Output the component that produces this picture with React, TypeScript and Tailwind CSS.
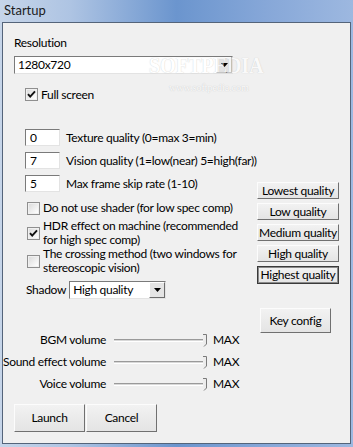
import React from 'react'

const font = "font-['Lato','Liberation_Sans',sans-serif]"

const Check = ({ checked }: { checked?: boolean }) => (
  <span className="w-[13px] h-[13px] shrink-0 border border-[#8f8f8f] bg-white flex items-center justify-center">
    <span className="w-[11px] h-[11px] border border-[#f0f0f0] bg-gradient-to-br from-[#dcdcdc] to-white flex items-center justify-center">
      {checked && (
        <svg width="9" height="9" viewBox="0 0 9 9">
          <path d="M1 4.2 L3.2 6.6 L8 1.4" stroke="#111" strokeWidth="1.9" fill="none" />
        </svg>
      )}
    </span>
  </span>
)

const Arrow = () => (
  <svg width="7" height="4" viewBox="0 0 7 4">
    <path d="M0 0 H7 L3.5 4 Z" fill="#000" />
  </svg>
)

const Combo = ({ value, width }: { value: string; width: string }) => (
  <div className={`${width} shrink-0 h-[18px] flex border-t border-l border-[#7a7a7a] border-b border-r border-b-[#e3e3e3] border-r-[#e3e3e3] bg-white`}>
    <div className="flex-1 pl-[3px] leading-[16px] whitespace-nowrap">{value}</div>
    <div className="w-[16px] h-[16px] bg-[#e4e4e4] border border-t-white border-l-white border-b-[#6c6c6c] border-r-[#6c6c6c] flex items-center justify-center">
      <Arrow />
    </div>
  </div>
)

const NumBox = ({ value, label }: { value: string; label: string }) => (
  <div className="ml-[22px] flex items-center h-[17px] whitespace-nowrap">
    <div className="w-[35px] shrink-0 h-[17px] bg-white border-t border-l border-[#7a7a7a] border-b border-r border-b-[#e3e3e3] border-r-[#e3e3e3] pl-[4px] leading-[15px]">
      {value}
    </div>
    <span className="ml-[6px]">{label}</span>
  </div>
)

const Btn = ({ label, w, h, strong }: { label: string; w: string; h: string; strong?: boolean }) => (
  <div
    className={`${w} ${h} shrink-0 whitespace-nowrap flex items-center justify-center bg-gradient-to-b from-[#f2f2f2] to-[#e4e4e4] border ${
      strong ? 'border-[#3a3a3a] outline outline-1 outline-[#8a8a8a] -outline-offset-2' : 'border-t-[#fcfcfc] border-l-[#fcfcfc] border-b-[#707070] border-r-[#707070]'
    }`}
  >
    {label}
  </div>
)

const Slider = ({ label }: { label: string }) => (
  <div className="flex items-center h-[20px] whitespace-nowrap">
    <span className="w-[103px] shrink-0 text-right">{label}</span>
    <div className="ml-[8px] relative w-[94px] shrink-0 h-[13px] flex items-center">
      <div className="w-[89px] h-[3px] border-t border-[#9a9a9a] bg-[#d8d8d8] border-b border-b-white" />
      <svg className="absolute right-0 top-0" width="6" height="13" viewBox="0 0 6 13">
        <path d="M1 0.5 H4.5 V10 L2 12.5" stroke="#7a7a7a" fill="#ececec" strokeWidth="1" />
      </svg>
    </div>
    <span className="ml-[5px]">MAX</span>
  </div>
)

export default function App() {
  return (
    <div className={`w-[353px] h-[447px] ${font} text-[12px] tracking-[-0.3px] text-black pt-[22px] pl-[2px] pr-[2px] pb-[3px] bg-[linear-gradient(90deg,#c6d5e9_0%,#aec4e3_20%,#6b95ce_50%,#86a7d8_75%,#9db8e0_100%)] relative`}>
      <div className="absolute left-[4px] top-[2px] text-[13px] leading-[17px] tracking-normal text-[#1b1b1b]">Startup</div>
      <div className="w-full h-full border border-[#54647a] bg-[#f0f0f0] relative overflow-hidden">
        <div className="flex">
          <div className="w-[254px] shrink-0 flex flex-col">
            <div className="ml-[11px] mt-[12px] h-[16px] leading-[16px]">Resolution</div>
            <div className="ml-[11px] mt-[5px]">
              <Combo value="1280x720" width="w-[219px]" />
            </div>
            <div className="ml-[22px] mt-[13px] h-[15px] flex items-center gap-[3px]">
              <Check checked />
              <span>Full screen</span>
            </div>
            <div className="mt-[27px] flex flex-col gap-[6px]">
              <NumBox value="0" label="Texture quality (0=max 3=min)" />
              <NumBox value="7" label="Vision quality (1=low(near) 5=high(far))" />
              <NumBox value="5" label="Max frame skip rate (1-10)" />
            </div>
            <div className="ml-[24px] mt-[8px] h-[16px] flex items-center gap-[3px] whitespace-nowrap">
              <Check />
              <span>Do not use shader (for low spec comp)</span>
            </div>
            <div className="ml-[24px] mt-[3px] flex items-center gap-[3px] leading-[14px]">
              <Check checked />
              <span className="whitespace-nowrap">
                HDR effect on machine (recommended
                <br />
                for high spec comp)
              </span>
            </div>
            <div className="ml-[24px] mt-[0px] flex items-center gap-[3px] leading-[14px]">
              <Check />
              <span className="whitespace-nowrap">
                The crossing method (two windows for
                <br />
                stereoscopic vision)
              </span>
            </div>
            <div className="ml-[23px] mt-[6px] flex items-center gap-[3px]">
              <span>Shadow</span>
              <Combo value="High quality" width="w-[97px]" />
            </div>
            <div className="mt-[31px] flex flex-col gap-[2px]">
              <Slider label="BGM volume" />
              <Slider label="Sound effect volume" />
              <Slider label="Voice volume" />
            </div>
            <div className="ml-[11px] mt-[10px] flex gap-[1px]">
              <Btn label="Launch" w="w-[71px]" h="h-[28px]" />
              <Btn label="Cancel" w="w-[71px]" h="h-[28px]" />
            </div>
          </div>
          <div className="pt-[159px] flex flex-col">
            <div className="flex flex-col gap-[4px]">
              <Btn label="Lowest quality" w="w-[82px]" h="h-[17px]" />
              <Btn label="Low quality" w="w-[82px]" h="h-[17px]" />
              <Btn label="Medium quality" w="w-[82px]" h="h-[17px]" />
              <Btn label="High quality" w="w-[82px]" h="h-[17px]" />
              <Btn label="Highest quality" w="w-[82px]" h="h-[18px]" strong />
            </div>
            <div className="ml-[3px] mt-[24px]">
              <Btn label="Key config" w="w-[71px]" h="h-[25px]" />
            </div>
          </div>
        </div>
        <div className="absolute left-[146px] top-[28px] text-[24px] leading-[28px] font-bold text-white opacity-60 font-['Liberation_Serif',serif] scale-x-[0.85] origin-left [text-shadow:0_0_1px_#a8a8a8]">
          SOFTPEDIA
        </div>
        <div className="absolute left-[166px] top-[57px] text-[10px] tracking-normal text-white opacity-80 font-['Liberation_Serif',serif] [text-shadow:0_0_1px_#b0b0b0]">
          www.softpedia.com
        </div>
      </div>
    </div>
  )
}
